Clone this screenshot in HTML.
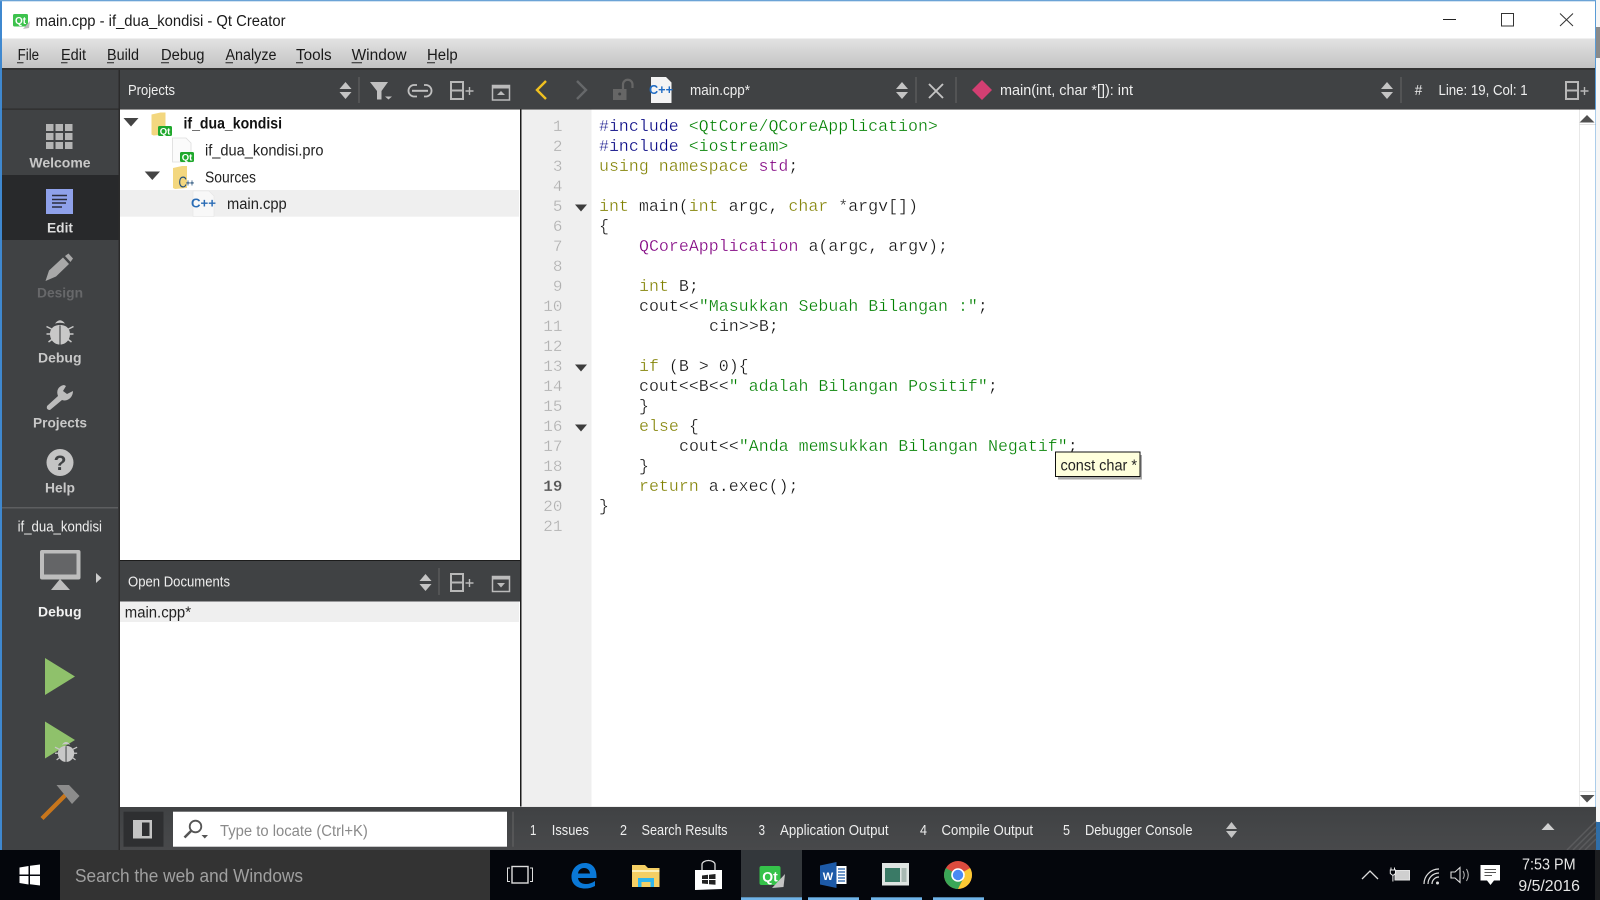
<!DOCTYPE html>
<html><head><meta charset="utf-8"><title>main.cpp - if_dua_kondisi - Qt Creator</title>
<style>
html,body{margin:0;padding:0;background:#000;width:1600px;height:900px;overflow:hidden}
svg{display:block;filter:blur(.3px)}
text{font-family:"Liberation Sans",sans-serif;white-space:pre}
.m{font-size:15.5px;fill:#1a1a1a}
.t{font-size:14.5px;fill:#eee}
.s{font-size:14px;font-weight:bold;fill:#c8c8c8;text-anchor:start}
.b{font-size:15.5px;fill:#222}
.c{font-family:"Liberation Mono",monospace;font-size:16.62px;fill:#111;stroke:#fff;stroke-width:.3px}
.n{font-family:"Liberation Mono",monospace;font-size:16px;fill:#b0b0b0;text-anchor:end;stroke:#efefef;stroke-width:.25px}
.k{fill:#808000}.g{fill:#008000}.v{fill:#000080}.p{fill:#800080}
</style></head><body>
<svg xmlns="http://www.w3.org/2000/svg" width="1600" height="900" viewBox="0 0 1600 900">
<defs>
<linearGradient id="menu" x1="0" y1="0" x2="0" y2="1"><stop offset="0" stop-color="#e2e2e2"/><stop offset="1" stop-color="#c2c2c2"/></linearGradient>
<linearGradient id="bot" x1="0" y1="0" x2="0" y2="1"><stop offset="0" stop-color="#404244"/><stop offset="1" stop-color="#48494b"/></linearGradient>
<g id="ud"><path d="M6 0L12 7H0Z M0 10H12L6 17Z" fill="#c4c4c4"/></g>
<g id="split"><rect x="1" y="1" width="12" height="17" fill="none" stroke="#b8b8b8" stroke-width="2"/><path d="M1 9.500H13" stroke="#b8b8b8" stroke-width="2"/><path d="M15.500 10H23.500M19.500 6V14" stroke="#b8b8b8" stroke-width="1.400"/></g>
<g id="qt"><rect width="14" height="10" rx="1.500" fill="#1fa82c"/><text x="7" y="8.600" text-anchor="middle" font-size="9.500" font-weight="bold" style="fill:#fff">Qt</text></g>
<path id="folder" d="M0 2L9 0 14 0V22L2 23 0 22Z" fill="#f3d77f"/>
<g id="bug"><path d="M0 7.500L5 10M27 7.500L22 10M0 15H4M27 15H23M2 23L6 20M25 23L21 20" stroke="#c8c8c8" stroke-width="1.500" fill="none"/><path d="M13.500 6C6 6 3.500 11 3.500 15C3.500 21 8 25.500 13 25.500V7Z M13.500 6C21 6 23.500 11 23.500 15C23.500 21 19 25.500 14 25.500V7Z" fill="#c8c8c8"/><path d="M8.500 4.500Q13.500 -2 18.500 4.500Q13.500 3 8.500 4.500Z" fill="#c8c8c8"/><path d="M13.500 6.500V25.500" stroke="#404244" stroke-width="1.100"/></g>
</defs>

<!-- window -->
<rect width="1600" height="900" fill="#dfdfdf"/>
<rect x="0" y="0" width="2" height="850" fill="#3f88cf"/>
<rect x="1596" y="0" width="4" height="850" fill="#f6f6f6"/>
<rect x="1596" y="27" width="4" height="31" fill="#8a8a8a"/>
<rect x="1596" y="822" width="4" height="28" fill="#2f6ea8"/>
<rect x="1595" y="0" width="1" height="850" fill="#5a9bd5"/>
<rect x="2" y="1" width="1593" height="37.500" fill="#fff"/>
<rect x="0" y="0" width="1596" height="1.300" fill="#6ba3d6"/>
<rect x="2" y="38.500" width="1593" height="30" fill="url(#menu)"/>
<rect x="2" y="68" width="1593" height="2" fill="#333"/>

<!-- title -->
<rect x="13" y="14" width="15" height="12.500" rx="1.500" fill="#3dc24d"/>
<text x="20.500" y="23.800" text-anchor="middle" font-size="10" font-weight="bold" style="fill:#fff">Qt</text>
<path d="M23 29L30 21 29 28Z" fill="#bbb"/>
<text class="m" x="35.500" y="26" textLength="250" lengthAdjust="spacingAndGlyphs">main.cpp - if_dua_kondisi - Qt Creator</text>
<path d="M1443 19.500H1456" stroke="#222" stroke-width="1"/>
<rect x="1501.500" y="13.500" width="12" height="12.500" fill="none" stroke="#333" stroke-width="1"/>
<path d="M1560 13.500L1573 26M1573 13.500L1560 26" stroke="#333" stroke-width="1"/>

<!-- menu -->
<g class="mn">
<text class="m" x="17.600" y="60" textLength="21.500" lengthAdjust="spacingAndGlyphs">File</text>
<text class="m" x="61" y="60" textLength="25" lengthAdjust="spacingAndGlyphs">Edit</text>
<text class="m" x="107" y="60" textLength="32" lengthAdjust="spacingAndGlyphs">Build</text>
<text class="m" x="161" y="60" textLength="43.500" lengthAdjust="spacingAndGlyphs">Debug</text>
<text class="m" x="225.500" y="60" textLength="51" lengthAdjust="spacingAndGlyphs">Analyze</text>
<text class="m" x="296" y="60" textLength="35.600" lengthAdjust="spacingAndGlyphs">Tools</text>
<text class="m" x="351.600" y="60" textLength="55" lengthAdjust="spacingAndGlyphs">Window</text>
<text class="m" x="427" y="60" textLength="30.700" lengthAdjust="spacingAndGlyphs">Help</text>
</g>
<path d="M17 62.800H23.500M61 62.800H67.500M107 62.800H114M161 62.800H169M225.500 62.800H233M296 62.800H303M351.600 62.800H362M427 62.800H435" stroke="#222" stroke-width="1"/>

<!-- toolbars -->
<rect x="2" y="70" width="1593" height="39.500" fill="#404244"/>
<rect x="2" y="109" width="1593" height="1" fill="#2c2c2c"/>
<rect x="2" y="70" width="117" height="780" fill="#404244"/>
<rect x="118.500" y="70" width="1.500" height="780" fill="#2b2b2b"/>
<rect x="2" y="108.500" width="117" height="1.200" fill="#2c2c2c"/>

<text class="t" x="128" y="95" textLength="47" lengthAdjust="spacingAndGlyphs">Projects</text>
<use href="#ud" x="339.500" y="82"/>
<rect x="358.500" y="77" width="1" height="26" fill="#666"/>
<path d="M370 82H388L381.500 91V99.500H377V91Z" fill="#c0c0c0"/><path d="M385 96.500H392L388.500 99.500Z" fill="#c0c0c0"/>
<g fill="none" stroke="#c0c0c0" stroke-width="1.800"><path d="M417 85H413.500a5.800 5.800 0 0 0 0 11.500H417"/><path d="M424 85H426.500a5.800 5.800 0 0 1 0 11.500H424"/><path d="M412 90.800H428" stroke-width="2"/></g>
<use href="#split" x="450" y="81"/>
<g><rect x="492.500" y="85.500" width="17" height="14.500" fill="none" stroke="#bbb" stroke-width="1.500"/><rect x="492.500" y="85.500" width="17" height="3" fill="#bbb"/><path d="M501 91L505 95H497Z" fill="#bbb"/></g>

<!-- editor toolbar -->
<path d="M546 81L537 90L546 99" fill="none" stroke="#f0c020" stroke-width="2.400"/>
<path d="M577 81L586 90L577 99" fill="none" stroke="#66686a" stroke-width="2.400"/>
<rect x="613" y="89" width="13.500" height="11" fill="#666"/><path d="M623 89V84.500a4.500 4.500 0 0 1 9.500 0V88" fill="none" stroke="#666" stroke-width="2.200"/><circle cx="619.700" cy="94" r="1.500" fill="#404244"/>
<path d="M651 77H666L671.500 82.500V103H651Z" fill="#f4f4f4"/>
<text x="649" y="94" font-size="12.500" font-weight="bold" style="fill:#1f6cc4" textLength="24" lengthAdjust="spacingAndGlyphs">C++</text>
<text class="t" x="690" y="95" textLength="60" lengthAdjust="spacingAndGlyphs">main.cpp*</text>
<use href="#ud" x="896" y="82"/>
<rect x="915.500" y="77" width="1" height="26" fill="#666"/>
<path d="M929 84L943 98M943 84L929 98" stroke="#c4c4c4" stroke-width="1.900"/>
<rect x="955.500" y="77" width="1" height="26" fill="#666"/>
<path d="M982 80L992 90L982 100L972 90Z" fill="#d33f72"/>
<text class="t" x="1000" y="95" textLength="133" lengthAdjust="spacingAndGlyphs">main(int, char *[]): int</text>
<use href="#ud" x="1381" y="82"/>
<rect x="1400.500" y="77" width="1" height="26" fill="#666"/>
<text class="t" x="1414.700" y="95" textLength="7.500" lengthAdjust="spacingAndGlyphs">#</text>
<text class="t" x="1438.500" y="95" textLength="89.100" lengthAdjust="spacingAndGlyphs">Line: 19, Col: 1</text>
<use href="#split" x="1565" y="81"/>

<!-- sidebar -->
<rect x="2" y="175" width="116.500" height="65" fill="#28292b"/>
<g fill="#b4b4b4"><rect x="46" y="124" width="7.500" height="7"/><rect x="55.500" y="124" width="7.500" height="7"/><rect x="65" y="124" width="7.500" height="7"/><rect x="46" y="133" width="7.500" height="7"/><rect x="55.500" y="133" width="7.500" height="7"/><rect x="65" y="133" width="7.500" height="7"/><rect x="46" y="142" width="7.500" height="7"/><rect x="55.500" y="142" width="7.500" height="7"/><rect x="65" y="142" width="7.500" height="7"/></g>
<text class="s" x="29.400" y="167.500" textLength="61.200" lengthAdjust="spacingAndGlyphs">Welcome</text>
<rect x="46" y="189" width="27" height="25" fill="#8fa1ea"/>
<path d="M52 195.500H67M52 199.500H67M52 203H66M52 207H62" stroke="#2a2c3c" stroke-width="1.600"/>
<text class="s" x="47" y="232.500" textLength="26" lengthAdjust="spacingAndGlyphs" style="fill:#ddd">Edit</text>
<path d="M45.500 281L49 270.500L63 257.500L69 264L56 276.500Z M65 256L68.500 253.500L73 258.500L70.500 262Z" fill="#a8a8a8"/>
<text class="s" x="37" y="297.500" textLength="46" lengthAdjust="spacingAndGlyphs" style="fill:#67686a">Design</text>
<use href="#bug" x="46.500" y="319"/>
<text class="s" x="38" y="362.500" textLength="43.500" lengthAdjust="spacingAndGlyphs">Debug</text>
<path d="M64 385C58 386 56 391 58 396L47 406Q46 410 50 410L62 400C68 402 73 397 73 391L67 394L63 391L66 386Z" fill="#bcbcbc"/>
<text class="s" x="33" y="427.500" textLength="54" lengthAdjust="spacingAndGlyphs">Projects</text>
<circle cx="60" cy="462.500" r="13.500" fill="#c4c4c4"/>
<text x="60" y="470" text-anchor="middle" font-size="21" font-weight="bold" style="fill:#404244">?</text>
<text class="s" x="45" y="492.500" textLength="30" lengthAdjust="spacingAndGlyphs">Help</text>
<rect x="2" y="507" width="116" height="1.500" fill="#5d5e60"/>
<text class="t" x="17.600" y="531.500" textLength="84.400" lengthAdjust="spacingAndGlyphs">if_dua_kondisi</text>
<rect x="40" y="550" width="40.500" height="29.500" rx="2" fill="#bdbdbd"/><rect x="44" y="553.500" width="32.500" height="21" fill="#646567"/>
<path d="M60 579L51 590H70Z" fill="#bdbdbd"/>
<path d="M96 573L101.500 578L96 583Z" fill="#ccc"/>
<text class="s" x="38" y="616.500" textLength="43.500" lengthAdjust="spacingAndGlyphs" style="fill:#f2f2f2">Debug</text>
<path d="M45 658L75 676.500L45 695Z" fill="#8fc16b"/>
<path d="M45 721.500L75 740L45 758.500Z" fill="#8fc16b"/>
<use href="#bug" transform="translate(55 741) scale(.82)"/>
<path d="M42 818.500L66 794.500" stroke="#c8761c" stroke-width="4.200"/>
<path d="M56.500 785H69L79.500 796L72 804L63.500 793.500Z" fill="#8c8c8c"/>

<!-- tree pane -->
<rect x="120" y="109.500" width="400" height="451" fill="#fff"/>
<rect x="120" y="560" width="401" height="1.300" fill="#1c1c1c"/>
<rect x="520" y="109.500" width="1.500" height="697" fill="#1c1c1c"/>
<path d="M123.500 118H138.500L131 126.500Z" fill="#444"/>
<use href="#folder" x="151.500" y="112.500"/>
<use href="#qt" x="158" y="126"/>
<text x="183.500" y="128.500" font-size="15.500" font-weight="bold" textLength="98.500" lengthAdjust="spacingAndGlyphs" style="fill:#111">if_dua_kondisi</text>
<path d="M172.500 138H186L191 143V162H172.500Z" fill="#fbfbfb" stroke="#ddd" stroke-width=".8"/>
<use href="#qt" x="180" y="152"/>
<text class="b" x="205" y="155.500" textLength="118.500" lengthAdjust="spacingAndGlyphs">if_dua_kondisi.pro</text>
<path d="M144.700 171.500H160L152.300 180Z" fill="#444"/>
<use href="#folder" x="173" y="166"/>
<text x="178.500" y="187.500" font-size="16" style="fill:#24507a" textLength="8.500" lengthAdjust="spacingAndGlyphs">C</text>
<text x="186" y="186.500" font-size="10" font-weight="bold" style="fill:#24507a" textLength="8" lengthAdjust="spacingAndGlyphs">++</text>
<text class="b" x="205" y="182.500" textLength="51" lengthAdjust="spacingAndGlyphs">Sources</text>
<rect x="120" y="190" width="399" height="26.700" fill="#efefef"/>
<path d="M193 191H209L214 196V216.500H193Z" fill="#f8f8f8" stroke="#e4e4e4" stroke-width=".6"/>
<text x="191" y="207.500" font-size="13" font-weight="bold" textLength="25" lengthAdjust="spacingAndGlyphs" style="fill:#2a6cb5">C++</text>
<text class="b" x="227" y="209" textLength="59.700" lengthAdjust="spacingAndGlyphs">main.cpp</text>

<!-- open docs -->
<rect x="120" y="561" width="400" height="40.500" fill="#404244"/>
<text class="t" x="128" y="586.500" textLength="102" lengthAdjust="spacingAndGlyphs">Open Documents</text>
<use href="#ud" x="419.500" y="574"/>
<rect x="438.500" y="568" width="1" height="27" fill="#666"/>
<use href="#split" x="450" y="573"/>
<rect x="492.500" y="576.500" width="17" height="15" fill="none" stroke="#bbb" stroke-width="1.500"/><rect x="492.500" y="576.500" width="17" height="3" fill="#bbb"/><path d="M497 583H505L501 587.500Z" fill="#bbb"/>
<rect x="120" y="601.500" width="400" height="205.500" fill="#fff"/>
<rect x="120" y="601.500" width="399" height="20.500" fill="#efefef"/>
<text class="b" x="124.800" y="617.700" textLength="66.200" lengthAdjust="spacingAndGlyphs">main.cpp*</text>

<!-- editor -->
<rect x="521.500" y="109.500" width="1073.500" height="697" fill="#fff"/>
<rect x="521.500" y="109.500" width="70" height="697" fill="#efefef"/>
<g class="ln">
<text class="n" x="562.500" y="131">1</text><text class="n" x="562.500" y="151">2</text><text class="n" x="562.500" y="171">3</text><text class="n" x="562.500" y="191">4</text><text class="n" x="562.500" y="211">5</text><text class="n" x="562.500" y="231">6</text><text class="n" x="562.500" y="251">7</text><text class="n" x="562.500" y="271">8</text><text class="n" x="562.500" y="291">9</text><text class="n" x="562.500" y="311">10</text><text class="n" x="562.500" y="331">11</text><text class="n" x="562.500" y="351">12</text><text class="n" x="562.500" y="371">13</text><text class="n" x="562.500" y="391">14</text><text class="n" x="562.500" y="411">15</text><text class="n" x="562.500" y="431">16</text><text class="n" x="562.500" y="451">17</text><text class="n" x="562.500" y="471">18</text><text class="n" x="562.500" y="491" font-weight="bold" style="fill:#555">19</text><text class="n" x="562.500" y="511">20</text><text class="n" x="562.500" y="531">21</text>
</g>
<path d="M575 204.500H587L581 211.500Z M575 364.500H587L581 371.500Z M575 424.500H587L581 431.500Z" fill="#3c3c3c"/>
<g>
<text class="c" x="599" y="131"><tspan class="v">#include</tspan> <tspan class="g">&lt;QtCore/QCoreApplication&gt;</tspan></text>
<text class="c" x="599" y="151"><tspan class="v">#include</tspan> <tspan class="g">&lt;iostream&gt;</tspan></text>
<text class="c" x="599" y="171"><tspan class="k">using namespace</tspan> <tspan class="p">std</tspan>;</text>
<text class="c" x="599" y="211"><tspan class="k">int</tspan> main(<tspan class="k">int</tspan> argc, <tspan class="k">char</tspan> *argv[])</text>
<text class="c" x="599" y="231">{</text>
<text class="c" x="639" y="251"><tspan class="p">QCoreApplication</tspan> a(argc, argv);</text>
<text class="c" x="639" y="291"><tspan class="k">int</tspan> B;</text>
<text class="c" x="639" y="311">cout&lt;&lt;<tspan class="g">"Masukkan Sebuah Bilangan :"</tspan>;</text>
<text class="c" x="709" y="331">cin&gt;&gt;B;</text>
<text class="c" x="639" y="371"><tspan class="k">if</tspan> (B &gt; 0){</text>
<text class="c" x="639" y="391">cout&lt;&lt;B&lt;&lt;<tspan class="g">" adalah Bilangan Positif"</tspan>;</text>
<text class="c" x="639" y="411">}</text>
<text class="c" x="639" y="431"><tspan class="k">else</tspan> {</text>
<text class="c" x="679" y="451">cout&lt;&lt;<tspan class="g">"Anda memsukkan Bilangan Negatif"</tspan>;</text>
<text class="c" x="639" y="471">}</text>
<text class="c" x="639" y="491"><tspan class="k">return</tspan> a.exec();</text>
<text class="c" x="599" y="511">}</text>
</g>
<!-- scrollbar -->
<rect x="1579" y="109.500" width="16.500" height="697" fill="#fff"/>
<rect x="1579" y="109.500" width="1" height="697" fill="#e8e8e8"/>
<rect x="1579" y="124" width="16.500" height="1" fill="#e0e0e0"/>
<rect x="1579" y="791" width="16.500" height="1" fill="#e0e0e0"/>
<path d="M1587 115L1594.500 122.500H1579.500Z M1580 795H1594.500L1587 802.500Z" fill="#505050"/>

<!-- tooltip -->
<rect x="1058" y="455" width="84" height="24.500" fill="#aaa"/>
<rect x="1055.500" y="452" width="84.500" height="24.500" fill="#ffffdc" stroke="#111" stroke-width="1"/>
<text x="1060.500" y="470.500" font-size="15.500" textLength="76.500" lengthAdjust="spacingAndGlyphs" style="fill:#222">const char *</text>

<!-- bottom bar -->
<rect x="120" y="807" width="1476" height="43" fill="url(#bot)"/>
<rect x="123.500" y="811.700" width="40" height="35" fill="#2e2f31"/>
<rect x="133" y="820" width="19" height="18.500" fill="#c4c4c4"/><rect x="142" y="822.500" width="7.500" height="13.500" fill="#2e2f31"/>
<rect x="173" y="811.700" width="334" height="35" fill="#fff"/>
<circle cx="195.500" cy="826.500" r="5.800" fill="none" stroke="#555" stroke-width="1.800"/>
<path d="M191 831L184.500 837.500" stroke="#555" stroke-width="2.600"/><path d="M201.500 835H208L204.800 838.500Z" fill="#555"/>
<text x="220" y="836" font-size="15.500" textLength="147.800" lengthAdjust="spacingAndGlyphs" style="fill:#8a8a8a">Type to locate (Ctrl+K)</text>
<rect x="512.500" y="811.700" width="1" height="35" fill="#666"/>

<g>
<text class="t" x="530" y="835" textLength="6.400" lengthAdjust="spacingAndGlyphs">1</text>
<text class="t" x="551.800" y="835" textLength="37.200" lengthAdjust="spacingAndGlyphs">Issues</text>
<text class="t" x="620" y="835" textLength="7" lengthAdjust="spacingAndGlyphs">2</text>
<text class="t" x="641.500" y="835" textLength="86" lengthAdjust="spacingAndGlyphs">Search Results</text>
<text class="t" x="758.600" y="835" textLength="6.400" lengthAdjust="spacingAndGlyphs">3</text>
<text class="t" x="780" y="835" textLength="108.600" lengthAdjust="spacingAndGlyphs">Application Output</text>
<text class="t" x="920" y="835" textLength="7" lengthAdjust="spacingAndGlyphs">4</text>
<text class="t" x="941.500" y="835" textLength="91.500" lengthAdjust="spacingAndGlyphs">Compile Output</text>
<text class="t" x="1063" y="835" textLength="7" lengthAdjust="spacingAndGlyphs">5</text>
<text class="t" x="1085" y="835" textLength="107.500" lengthAdjust="spacingAndGlyphs">Debugger Console</text>
</g>
<path d="M1231.500 822L1237 829H1226Z M1226 831H1237L1231.500 838Z" fill="#c4c4c4"/>
<path d="M1548 823L1554.500 830H1541.500Z" fill="#d0d0d0"/>
<path d="M1567 850L1596 821M1573 850L1596 827M1579 850L1596 833M1585 850L1596 839" stroke="#5a5b5d" stroke-width="1.500"/>

<!-- taskbar -->
<rect x="0" y="850" width="1600" height="50" fill="#04060c"/>
<rect x="60" y="850" width="430" height="50" fill="#333"/>
<path d="M19.500 867.500L28.500 866V874.500H19.500Z M30 865.800L40 864.500V874.500H30Z M19.500 876H28.500V884.500L19.500 883Z M30 876H40V885.500L30 884.300Z" fill="#fff"/>
<text x="75" y="882" font-size="18.500" textLength="228" lengthAdjust="spacingAndGlyphs" style="fill:#a0a0a0">Search the web and Windows</text>
<rect x="512" y="866.500" width="16" height="16.500" fill="none" stroke="#ddd" stroke-width="1.400"/>
<path d="M510 868H507.500V881.500H510M530 868H532.500V881.500H530" fill="none" stroke="#ddd" stroke-width="1"/>

<path fill-rule="evenodd" d="M571.500 877C571.500 869 577 863 585 863C592 863 596.500 868 596.500 876V878H578C578.500 882 581.500 884 586 884C589 884 592 883 595 881V886C592 887.500 589 888.500 585 888.500C577 888.500 571.500 884 571.500 877ZM578 873.500H590C589.500 870 587.500 868 584 868C581 868 578.500 870 578 873.500Z" fill="#0a78d7"/>

<path d="M632 865H645L648 868H659.500V887H632Z" fill="#f5cf64"/><rect x="632" y="870" width="27.500" height="2" fill="#fdf0b8"/>
<path d="M638 878H654V887H650.500V882H641.500V887H638Z" fill="#2fb5ec"/>

<path d="M695 870H722V889L695 890Z" fill="#fff"/>
<path d="M702 870V864.500a6.500 4 0 0 1 13 0V870" fill="none" stroke="#ddd" stroke-width="1.300"/>
<path d="M702 875.500L708 874.800V879H702Z M709 874.700L715.500 874V879H709Z M702 880H708V884L702 883.500Z M709 880H715.500V884.800L709 884.200Z" fill="#222"/>

<rect x="741" y="850" width="61" height="50" fill="#33373b"/>
<rect x="759.500" y="866" width="21" height="19" rx="2" fill="#35c24a"/>
<text x="770" y="881.500" text-anchor="middle" font-size="14" font-weight="bold" style="fill:#fff">Qt</text>
<path d="M772 888L785 874L783.500 887Z" fill="#c4c4c4"/>

<path d="M820 865.500L836.500 862V888L820 884.500Z" fill="#1d5aa8"/>
<rect x="836.500" y="866" width="10" height="18" fill="#fff"/><path d="M838 869H845M838 872H845M838 875H845M838 878H845M838 881H845" stroke="#1d5aa8" stroke-width="1.300"/>
<text x="828" y="880" text-anchor="middle" font-size="11" font-weight="bold" style="fill:#fff">W</text>

<rect x="882" y="863" width="27" height="22.500" fill="#dfe4e2"/>
<rect x="885" y="868" width="15" height="14" fill="#3a7a66"/><rect x="901.500" y="868" width="5" height="14" fill="#a8b8b2"/>

<circle cx="958" cy="875" r="14" fill="#dd4b3e"/>
<path d="M958 889A14 14 0 0 1 945.900 868L958 875L965 875Z" fill="#3aa757"/>
<path d="M972 875A14 14 0 0 1 958 889L965 875Z M970.100 868A14 14 0 0 1 972 875L958 875Z" fill="#fcc934"/>
<circle cx="958" cy="875" r="6.800" fill="#fff"/><circle cx="958" cy="875" r="5.200" fill="#4a8af4"/>

<g fill="#6fb3e8"><rect x="741" y="897.300" width="61" height="2.700"/><rect x="808" y="897.300" width="51" height="2.700"/><rect x="871" y="897.300" width="51" height="2.700"/><rect x="933" y="897.300" width="51" height="2.700"/></g>

<!-- tray -->
<path d="M1362 879L1370 871L1378 879" fill="none" stroke="#ddd" stroke-width="1.300"/>
<rect x="1395" y="870.500" width="14.500" height="9.500" fill="#cfcfcf" stroke="#e4e4e4" stroke-width="1"/>
<path d="M1391 867.500V870M1394.500 867.500V870" stroke="#eee" stroke-width="1"/>
<path d="M1390.300 870H1395.500V873.500L1392.900 875.500L1390.300 873.500Z" fill="#04060c" stroke="#eee" stroke-width="1"/>
<path d="M1392.900 875.500V881.500" stroke="#eee" stroke-width="1"/>
<g fill="none" stroke="#ddd" stroke-width="1.200"><path d="M1424 884A15 15 0 0 1 1439 869"/><path d="M1428 884A11 11 0 0 1 1439 873"/><path d="M1432 884A7 7 0 0 1 1439 877"/></g><circle cx="1437.500" cy="883" r="1.500" fill="#ddd"/>
<path d="M1451 872H1455L1460 867.500V882.500L1455 878H1451Z" fill="none" stroke="#ddd" stroke-width="1.100"/><path d="M1463 871Q1465.500 875 1463 879M1466.500 869Q1470 875 1466.500 881" fill="none" stroke="#bbb" stroke-width="1"/>
<path d="M1480.500 865H1500V880.500H1494L1490.500 885L1487 880.500H1480.500Z" fill="#fff"/>
<path d="M1484.500 869.500H1496M1484.500 872.500H1496M1484.500 875.500H1492" stroke="#555" stroke-width="1"/>
<text x="1522" y="869.500" font-size="15.500" textLength="53.600" lengthAdjust="spacingAndGlyphs" style="fill:#e6e6e6">7:53 PM</text>
<text x="1518.400" y="891" font-size="15.500" textLength="61.600" lengthAdjust="spacingAndGlyphs" style="fill:#e6e6e6">9/5/2016</text>
<rect x="1595" y="850" width="5" height="50" fill="#1c1d20"/>
</svg>
</body></html>
